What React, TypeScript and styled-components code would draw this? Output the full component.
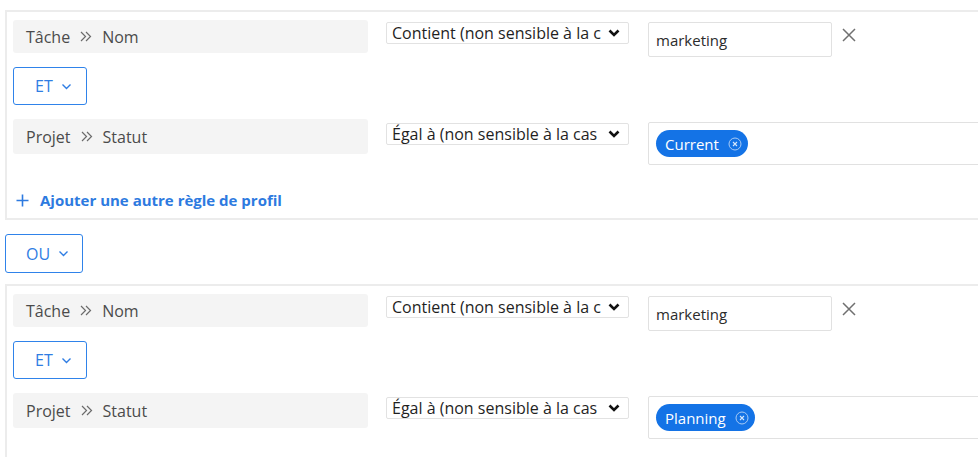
import React from "react";
import styled, { createGlobalStyle } from "styled-components";

const Global = createGlobalStyle`
  html, body { margin: 0; padding: 0; background: #fff; overflow: hidden; }
  body { font-family: "Open Sans", Lato, sans-serif; }
`;

const Page = styled.div`
  width: 1300px;
  padding: 10px 0 0 5px;
  display: flex;
  flex-direction: column;
  align-items: flex-start;
`;

const Group = styled.section<{ $mt?: number; $pb: number }>`
  width: 1200px;
  box-sizing: border-box;
  border: 2px solid #ececec;
  padding: 8px 6px ${(p) => p.$pb}px 6px;
  margin-top: ${(p) => p.$mt ?? 0}px;
  display: flex;
  flex-direction: column;
  align-items: flex-start;
`;

const Row = styled.div<{ $mt?: number }>`
  display: flex;
  align-items: flex-start;
  margin-top: ${(p) => p.$mt ?? 0}px;
`;

const FieldLabel = styled.div<{ $h: number }>`
  width: 355px;
  height: ${(p) => p.$h}px;
  box-sizing: border-box;
  background: #f4f4f4;
  border-radius: 3px;
  display: flex;
  align-items: center;
  gap: 10px;
  padding-left: 13px;
  font-size: 16px;
  color: #4b4b4b;
`;

const SelectBox = styled.div<{ $mt: number }>`
  width: 243px;
  height: 22px;
  box-sizing: border-box;
  margin: ${(p) => p.$mt}px 0 0 18px;
  border: 1px solid #e2e2e2;
  border-radius: 2px;
  display: flex;
  align-items: center;
  padding: 0 8px 0 5px;
  font-family: "Open Sans", sans-serif;
  font-size: 16px;
  color: #1f1f1f;
  background: #fff;
`;

const SelectText = styled.span`
  flex: 1;
  white-space: nowrap;
`;

const TextInput = styled.div<{ $mt: number }>`
  width: 184px;
  height: 35px;
  box-sizing: border-box;
  margin: ${(p) => p.$mt}px 0 0 19px;
  border: 1px solid #e1e1e1;
  border-radius: 2px;
  display: flex;
  align-items: center;
  padding-left: 7px;
  font-size: 15px;
  color: #2c2c2c;
`;

const ClearButton = styled.button`
  margin: 8px 0 0 10px;
  width: 14px;
  height: 14px;
  padding: 0;
  border: none;
  background: transparent;
  display: flex;
`;

const TagInput = styled.div<{ $mt: number }>`
  width: 420px;
  height: 43px;
  box-sizing: border-box;
  margin: ${(p) => p.$mt}px 0 0 19px;
  border: 1px solid #e1e1e1;
  border-radius: 2px;
  display: flex;
  align-items: center;
  padding-left: 7px;
`;

const Tag = styled.span`
  height: 27px;
  box-sizing: border-box;
  border-radius: 14px;
  background: #1473e6;
  color: #fff;
  font-size: 15px;
  display: inline-flex;
  align-items: center;
  gap: 9px;
  padding: 0 6px 0 9px;
`;

const LogicButton = styled.button<{ $w: number; $h: number; $mt?: number; $pl: number }>`
  width: ${(p) => p.$w}px;
  height: ${(p) => p.$h}px;
  margin-top: ${(p) => p.$mt ?? 0}px;
  box-sizing: border-box;
  border: 1.5px solid #2f83ea;
  border-radius: 3px;
  background: #fff;
  color: #2f7de3;
  font-family: "Open Sans", sans-serif;
  font-size: 16px;
  display: flex;
  align-items: center;
  gap: 8px;
  padding: 0 0 0 ${(p) => p.$pl}px;
`;

const AddLink = styled.a`
  margin-top: 25px;
  display: flex;
  align-items: center;
  gap: 11px;
  padding-left: 3px;
  color: #2d7ae0;
  font-weight: 700;
  font-size: 15px;
  height: 20px;
  cursor: pointer;
`;

const Chevron = () => (
  <svg width="11" height="11" viewBox="0 0 11 11">
    <polyline points="1.5,3.5 5.5,7.5 9.5,3.5" fill="none" stroke="currentColor" strokeWidth="1.4" />
  </svg>
);

const Breadcrumb = () => (
  <svg width="12" height="11" viewBox="0 0 12 11">
    <polyline points="1,1 5.5,5.5 1,10" fill="none" stroke="#6b6b6b" strokeWidth="1.2" />
    <polyline points="6,1 10.5,5.5 6,10" fill="none" stroke="#6b6b6b" strokeWidth="1.2" />
  </svg>
);

const SelectChevron = () => (
  <svg width="12" height="8" viewBox="0 0 12 8">
    <polyline points="1.5,1.5 6,6 10.5,1.5" fill="none" stroke="#111" strokeWidth="2.6" />
  </svg>
);

const Cross = () => (
  <svg width="14" height="14" viewBox="0 0 14 14">
    <path d="M1 1L13 13M13 1L1 13" stroke="#707070" strokeWidth="1.5" />
  </svg>
);

const TagClose = () => (
  <svg width="14" height="14" viewBox="0 0 14 14">
    <circle cx="7" cy="7" r="6" fill="none" stroke="#a9cbf5" strokeWidth="1" />
    <path d="M5 5L9 9M9 5L5 9" stroke="#d6e7fb" strokeWidth="1.1" />
  </svg>
);

const Plus = () => (
  <svg width="13" height="13" viewBox="0 0 13 13">
    <path d="M6.5 0.5V12.5M0.5 6.5H12.5" stroke="#2d7ae0" strokeWidth="1.6" />
  </svg>
);

type GroupProps = { status: string; mt?: number; withAdd?: boolean };

const RuleGroup = ({ status, mt, withAdd }: GroupProps) => (
  <Group $mt={mt} $pb={withAdd ? 8 : 40}>
    <Row>
      <FieldLabel $h={33}>
        <span>Tâche</span>
        <Breadcrumb />
        <span>Nom</span>
      </FieldLabel>
      <SelectBox $mt={2}>
        <SelectText>Contient (non sensible à la c</SelectText>
        <SelectChevron />
      </SelectBox>
      <TextInput $mt={2}>marketing</TextInput>
      <ClearButton aria-label="Supprimer">
        <Cross />
      </ClearButton>
    </Row>
    <LogicButton $w={74} $h={38} $mt={10} $pl={21}>
      ET <Chevron />
    </LogicButton>
    <Row $mt={14}>
      <FieldLabel $h={35}>
        <span>Projet</span>
        <Breadcrumb />
        <span>Statut</span>
      </FieldLabel>
      <SelectBox $mt={4}>
        <SelectText>Égal à (non sensible à la cas</SelectText>
        <SelectChevron />
      </SelectBox>
      <TagInput $mt={3}>
        <Tag>
          {status}
          <TagClose />
        </Tag>
      </TagInput>
    </Row>
    {withAdd && (
      <AddLink>
        <Plus />
        Ajouter une autre règle de profil
      </AddLink>
    )}
  </Group>
);

export default function App() {
  return (
    <>
      <Global />
      <Page>
        <RuleGroup status="Current" withAdd />
        <LogicButton $w={78} $h={39} $mt={14} $pl={20}>
          OU <Chevron />
        </LogicButton>
        <RuleGroup status="Planning" mt={11} />
      </Page>
    </>
  );
}
